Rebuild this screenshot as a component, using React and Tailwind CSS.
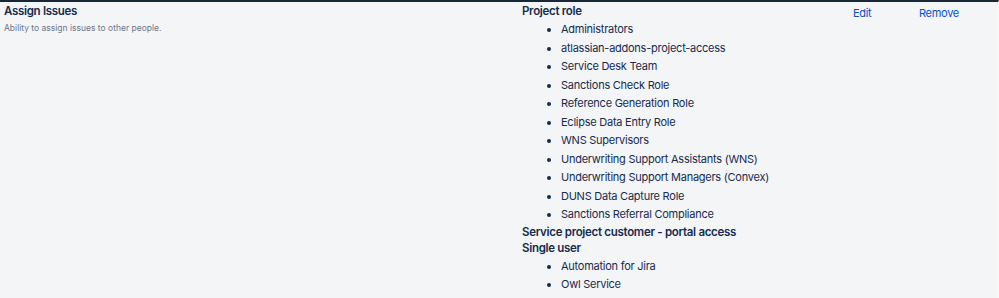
const ROLES = [
  "Administrators",
  "atlassian-addons-project-access",
  "Service Desk Team",
  "Sanctions Check Role",
  "Reference Generation Role",
  "Eclipse Data Entry Role",
  "WNS Supervisors",
  "Underwriting Support Assistants (WNS)",
  "Underwriting Support Managers (Convex)",
  "DUNS Data Capture Role",
  "Sanctions Referral Compliance",
];

const USERS = ["Automation for Jira", "Owl Service"];

function Items({ items }) {
  return (
    <ul className="list-disc pl-[39px] mt-px text-[11px] tracking-[-0.25px] leading-[18.5px] text-[#172b4d] marker:text-[11px]">
      {items.map((name) => (
        <li key={name}>{name}</li>
      ))}
    </ul>
  );
}

function Heading({ children }) {
  return (
    <div className="text-[11.5px] tracking-[-0.3px] font-semibold leading-4 text-[#172b4d]">{children}</div>
  );
}

export default function App() {
  return (
    <div
      className="w-[999px] h-[298px] overflow-hidden bg-[#f4f5f7] border-t-2 border-[#1c2736] border-r border-r-[#fbfbfc]"
      style={{ fontFamily: "Inter, 'Noto Sans', sans-serif" }}
    >
      <div className="flex">
        <div className="w-[518px] pl-1 pt-[1px]">
          <Heading>Assign Issues</Heading>
          <div className="text-[8.5px] leading-4 mt-px text-[#6b778c]">
            Ability to assign issues to other people.
          </div>
        </div>
        <div className="w-[330px] pl-1 pt-[1px]">
          <Heading>Project role</Heading>
          <Items items={ROLES} />
          <Heading>Service project customer - portal access</Heading>
          <Heading>Single user</Heading>
          <Items items={USERS} />
        </div>
        <div className="flex pt-[3px] text-[11px] tracking-[-0.3px] leading-4 text-[#0052cc]">
          <a className="ml-[5px] w-[66px]">Edit</a>
          <a>Remove</a>
        </div>
      </div>
    </div>
  );
}
